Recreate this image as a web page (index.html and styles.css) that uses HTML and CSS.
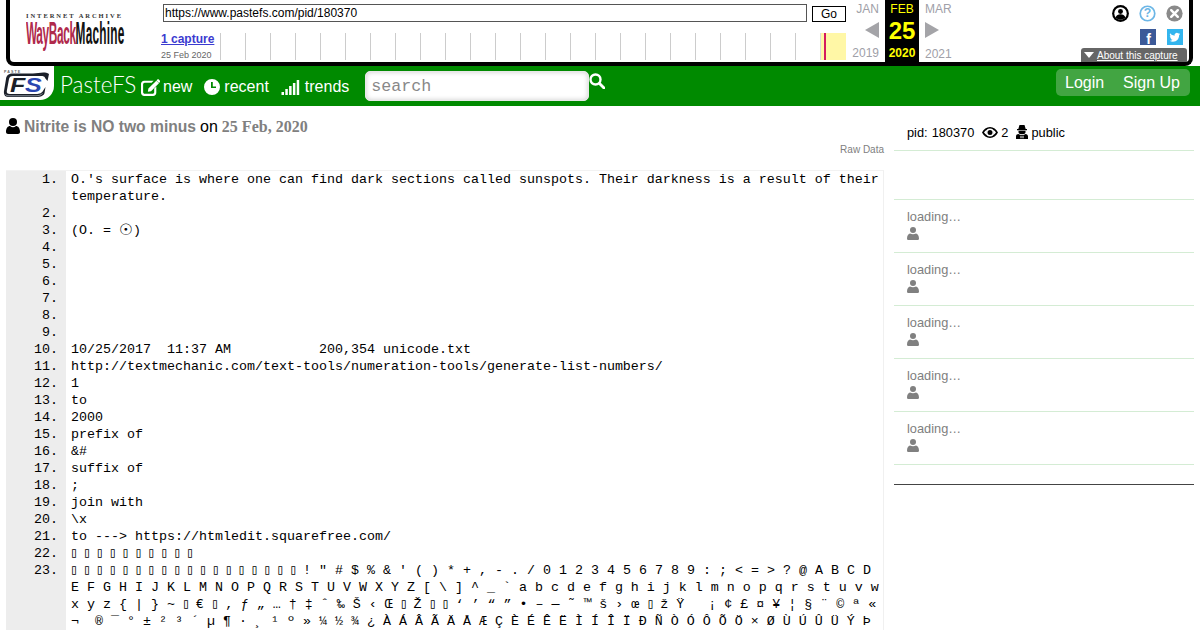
FILE: index.html
```html
<!DOCTYPE html>
<html lang="en">
<head>
<meta charset="utf-8">
<title>Nitrite is NO two minus - PasteFS</title>
<link rel="stylesheet" href="styles.css">
</head>
<body>
<header class="wb">
  <div class="wb-logo">
    <div class="wb-ia">INTERNET ARCHIVE</div>
    <div class="wb-mark"><span class="wb-red">WayBack</span><span class="wb-black">Machine</span></div>
  </div>
  <div class="wb-center">
    <div class="wb-url-row">
      <input class="wb-url" type="text" value="https://www.pastefs.com/pid/180370">
      <button class="wb-go" type="button">Go</button>
    </div>
    <div class="wb-spark-row">
      <div class="wb-cap"><a class="wb-cap-link" href="#">1 capture</a><span class="wb-cap-date">25 Feb 2020</span></div>
      <div class="wb-spark">
        <i></i><i></i><i></i><i></i><i></i><i></i><i></i><i></i><i></i><i></i><i></i><i></i><i></i><i></i><i></i><i></i><i></i><i></i><i></i><i></i><i></i><i></i><i></i><i></i>
        <b class="wb-year"><u></u></b>
      </div>
    </div>
  </div>
  <div class="wb-cal">
    <div class="wb-col wb-prev">
      <span class="wb-m">JAN</span>
      <svg class="wb-arrow" viewBox="0 0 14 16"><path d="M14 0V16L0 8Z"/></svg>
      <span class="wb-y">2019</span>
    </div>
    <div class="wb-col wb-now">
      <span class="wb-m">FEB</span>
      <span class="wb-d">25</span>
      <span class="wb-y">2020</span>
    </div>
    <div class="wb-col wb-next">
      <span class="wb-m">MAR</span>
      <svg class="wb-arrow" viewBox="0 0 14 16"><path d="M0 0V16L14 8Z"/></svg>
      <span class="wb-y">2021</span>
    </div>
  </div>
  <div class="wb-right">
    <div class="wb-icons">
      <svg class="wb-ic" viewBox="0 0 18 18"><circle cx="9" cy="9" r="8.9"/><circle cx="9" cy="9" r="6.6" fill="#fff"/><circle cx="9" cy="6.8" r="2.6"/><path d="M3.8 13.2c.8-2.6 2.8-3.4 5.2-3.4s4.4.8 5.2 3.4c-1.4 1.4-3.2 2.3-5.2 2.3s-3.8-.9-5.2-2.3z"/></svg>
      <svg class="wb-ic" viewBox="0 0 18 18"><circle cx="9" cy="9" r="7.7" fill="none" stroke="#6cb6e6" stroke-width="1.8"/><text class="wb-q" x="9" y="13.2" text-anchor="middle">?</text></svg>
      <svg class="wb-ic" viewBox="0 0 18 18"><circle cx="9" cy="9" r="8.6" fill="#8a8a8a"/><path d="M5.5 5.5l7 7M12.5 5.5l-7 7" stroke="#fff" stroke-width="2.6" stroke-linecap="round"/></svg>
    </div>
    <div class="wb-share">
      <svg class="wb-sq wb-fb" viewBox="0 0 16 16"><text class="wb-f" x="8.5" y="14.500" text-anchor="middle">f</text></svg>
      <svg class="wb-sq wb-tw" viewBox="0 0 16 16"><path fill="#fff" transform="translate(1.500 1.500) scale(.82)" d="M14 4.200c-.5.200-1 .4-1.500.4.500-.3 1-.8 1.200-1.400-.5.300-1.100.5-1.700.6a2.700 2.700 0 0 0-4.600 2.500C5.200 6.200 3.300 5.200 2 3.500c-.7 1.200-.4 2.800.8 3.600-.4 0-.8-.1-1.200-.3 0 1.300.9 2.400 2.100 2.700-.4.100-.8.100-1.200 0 .3 1.100 1.300 1.800 2.500 1.900-1 .8-2.300 1.200-3.600 1 1.200.8 2.600 1.200 4 1.200 4.900 0 7.700-4.100 7.500-7.900.6-.4 1.100-.9 1.100-1.500z"/></svg>
    </div>
    <div class="wb-about"><span class="wb-tri"></span><a class="wb-about-link" href="#">About this capture</a></div>
  </div>
</header>

<nav class="nav">
  <a class="logo" href="#">
    <svg class="logo-svg" viewBox="0 0 46 28">
      <text class="logo-paste" x="1" y="3.500">PASTE</text>
      <path d="M1 22L3 10C3.500 6 6 4.500 10 4.500H30C36 4 42 2 46 5L44.500 12 42 9C42 7.500 40 7 38 7H10C7.500 7 6.500 8 6 10L3.800 22C3.500 24 4.500 25 7 25H33C37 25 39 24 40.500 21L42.500 18 41.500 24C41 26.500 38 28 33 28H5C2 28 .5 25 1 22Z" fill="#1b2029"/>
      <path d="M2.500 25.500C3.500 26.500 4.500 26.800 6 26.800H33C36 26.800 38 26 39.500 24.500" fill="none" stroke="#aab0ba" stroke-width=".8"/>
      <text class="logo-f" transform="translate(7 23) scale(1.25 1)" x="0" y="0">F</text>
      <text class="logo-s" transform="translate(22 23) scale(1.25 1)" x="0" y="0">S</text>
    </svg>
  </a>
  <span class="brand">PasteFS</span>
  <a class="nav-link" href="#"><svg class="nav-ic" viewBox="0 0 18 16"><path d="M3 1.500h9l-2 2H3.500c-.8 0-1.500.7-1.500 1.500v7.500c0 .8.700 1.500 1.500 1.500H11c.8 0 1.500-.7 1.500-1.500V9l2-2v6c0 1.700-1.300 3-3 3H3c-1.700 0-3-1.300-3-3V4.500c0-1.700 1.300-3 3-3z"/><path d="M14.500 1.500l2.500 2.500-7.500 7.500-3 .5.500-3zM15.500.5c.4-.4 1-.4 1.400 0l1 1c.4.400.4 1 0 1.400l-.8.800-2.400-2.400z"/></svg>new</a>
  <a class="nav-link" href="#"><svg class="nav-ic nav-ic-clock" viewBox="0 0 16 16"><path fill-rule="evenodd" d="M8 0a8 8 0 1 1 0 16A8 8 0 0 1 8 0zM7 3v6h5V7.500H8.800V3z"/></svg>recent</a>
  <a class="nav-link" href="#"><svg class="nav-ic nav-ic-signal" viewBox="0 0 18 15"><rect x="0" y="12" width="2.500" height="3"/><rect x="3.800" y="9" width="2.500" height="6"/><rect x="7.600" y="6" width="2.500" height="9"/><rect x="11.400" y="3" width="2.500" height="12"/><rect x="15.200" y="0" width="2.500" height="15"/></svg>trends</a>
  <input class="search" type="text" placeholder="search">
  <svg class="search-ic" viewBox="0 0 16 16"><circle cx="6.500" cy="6.500" r="5" fill="none" stroke="#fff" stroke-width="2.400"/><path d="M10.500 10.500l4.500 4.500" stroke="#fff" stroke-width="2.800" stroke-linecap="round"/></svg>
  <div class="auth"><a class="auth-link" href="#">Login</a><a class="auth-link" href="#">Sign Up</a></div>
</nav>

<div class="page">
  <main class="main">
    <h1 class="title">
      <svg class="user-ic" viewBox="0 0 14 16"><circle cx="7" cy="4" r="4"/><path d="M0 14c0-4 2-6 4-6 1 .8 2 1.200 3 1.200S9 8.800 10 8c2 0 4 2 4 6 0 1.300-1 2-2 2H2c-1 0-2-.7-2-2z"/></svg>
      <a class="title-name" href="#">Nitrite is NO two minus</a> <span class="title-on">on</span> <span class="title-date">25 Feb, 2020</span>
    </h1>
    <div class="raw"><a class="raw-link" href="#">Raw Data</a></div>
    <div class="code">
      <div class="ln"><span class="n">1.</span><span class="t">O.'s surface is where one can find dark sections called sunspots. Their darkness is a result of their temperature.</span></div>
      <div class="ln"><span class="n">2.</span><span class="t"></span></div>
      <div class="ln"><span class="n">3.</span><span class="t">(O. = <span class="sun">☉</span>)</span></div>
      <div class="ln"><span class="n">4.</span><span class="t"></span></div>
      <div class="ln"><span class="n">5.</span><span class="t"></span></div>
      <div class="ln"><span class="n">6.</span><span class="t"></span></div>
      <div class="ln"><span class="n">7.</span><span class="t"></span></div>
      <div class="ln"><span class="n">8.</span><span class="t"></span></div>
      <div class="ln"><span class="n">9.</span><span class="t"></span></div>
      <div class="ln"><span class="n">10.</span><span class="t">10/25/2017  11:37 AM           200,354 unicode.txt</span></div>
      <div class="ln"><span class="n">11.</span><span class="t">http://textmechanic.com/text-tools/numeration-tools/generate-list-numbers/</span></div>
      <div class="ln"><span class="n">12.</span><span class="t">1</span></div>
      <div class="ln"><span class="n">13.</span><span class="t">to</span></div>
      <div class="ln"><span class="n">14.</span><span class="t">2000</span></div>
      <div class="ln"><span class="n">15.</span><span class="t">prefix of</span></div>
      <div class="ln"><span class="n">16.</span><span class="t">&amp;#</span></div>
      <div class="ln"><span class="n">17.</span><span class="t">suffix of</span></div>
      <div class="ln"><span class="n">18.</span><span class="t">;</span></div>
      <div class="ln"><span class="n">19.</span><span class="t">join with</span></div>
      <div class="ln"><span class="n">20.</span><span class="t">\x</span></div>
      <div class="ln"><span class="n">21.</span><span class="t">to ---&gt; https://htmledit.squarefree.com/</span></div>
      <div class="ln"><span class="n">22.</span><span class="t"><span class="tf">▯</span> <span class="tf">▯</span> <span class="tf">▯</span> <span class="tf">▯</span> <span class="tf">▯</span> <span class="tf">▯</span> <span class="tf">▯</span> <span class="tf">▯</span> <span class="tf">▯</span> <span class="tf">▯</span></span></div>
      <div class="ln"><span class="n">23.</span><span class="t"><span class="tf">▯</span> <span class="tf">▯</span> <span class="tf">▯</span> <span class="tf">▯</span> <span class="tf">▯</span> <span class="tf">▯</span> <span class="tf">▯</span> <span class="tf">▯</span> <span class="tf">▯</span> <span class="tf">▯</span> <span class="tf">▯</span> <span class="tf">▯</span> <span class="tf">▯</span> <span class="tf">▯</span> <span class="tf">▯</span> <span class="tf">▯</span> <span class="tf">▯</span> <span class="tf">▯</span> ! " # $ % &amp; ' ( ) * + , - . / 0 1 2 3 4 5 6 7 8 9 : ; &lt; = &gt; ? @ A B C D E F G H I J K L M N O P Q R S T U V W X Y Z [ \ ] ^ _ ` a b c d e f g h i j k l m n o p q r s t u v w x y z { | } ~ <span class="tf">▯</span> € <span class="tf">▯</span> ‚ ƒ „ … † ‡ ˆ ‰ Š ‹ Œ <span class="tf">▯</span> Ž <span class="tf">▯</span> <span class="tf">▯</span> ‘ ’ “ ” • – — ˜ ™ š › œ <span class="tf">▯</span> ž Ÿ &nbsp; ¡ ¢ £ ¤ ¥ ¦ § ¨ © ª « ¬ &shy; ® ¯ ° ± ² ³ ´ µ ¶ · ¸ ¹ º » ¼ ½ ¾ ¿ À Á Â Ã Ä Å Æ Ç È É Ê Ë Ì Í Î Ï Ð Ñ Ò Ó Ô Õ Ö × Ø Ù Ú Û Ü Ý Þ</span></div>
    </div>
  </main>
  <aside class="side">
    <div class="meta">
      <span class="meta-pid">pid:</span><span>180370</span>
      <svg class="eye-ic" viewBox="0 0 16 11"><path fill-rule="evenodd" d="M8 0c3.500 0 6.300 2.200 8 5.500C14.300 8.800 11.500 11 8 11S1.700 8.800 0 5.500C1.700 2.200 4.500 0 8 0zM8 1.500a4 4 0 1 0 0 8 4 4 0 0 0 0-8zM2 5.500c.7 1 1.500 1.800 2.500 2.400a5 5 0 0 1 0-4.800C3.500 3.700 2.700 4.500 2 5.500zM14 5.500c-.7-1-1.500-1.800-2.500-2.400a5 5 0 0 1 0 4.800c1-.6 1.800-1.400 2.500-2.400zM8 3a2.500 2.500 0 1 1 0 5 2.500 2.500 0 0 1 0-5z"/></svg>
      <span class="meta-views">2</span>
      <svg class="secret-ic" viewBox="0 0 12 14"><path d="M3.500 0h5l1.200 4H11v1.200H1V4h1.300z"/><path d="M2.500 5.800h7v1.500c0 1-1 2-3.500 2s-3.500-1-3.500-2z"/><path fill-rule="evenodd" d="M0 14v-2.500C0 10 1 9 2.500 9c1 .8 2 1 3.500 1s2.500-.2 3.500-1C11 9 12 10 12 11.500V14zM4.500 10.800v2.400h1v-2.400zM6.500 10.800v2.400h1v-2.400z"/></svg>
      <span>public</span>
    </div>
    <div class="spacer-row"></div>
    <div class="item"><span class="loading">loading…</span><svg class="item-ic" viewBox="0 0 12 13"><circle cx="6" cy="3" r="3"/><path d="M0 11.500C0 8.500 1.500 7 3 6.500c1 .6 2 .8 3 .8s2-.2 3-.8c1.500.5 3 2 3 5 0 1-.8 1.500-1.500 1.500h-9C.8 13 0 12.500 0 11.500z"/></svg></div>
    <div class="item"><span class="loading">loading…</span><svg class="item-ic" viewBox="0 0 12 13"><circle cx="6" cy="3" r="3"/><path d="M0 11.500C0 8.500 1.500 7 3 6.500c1 .6 2 .8 3 .8s2-.2 3-.8c1.500.5 3 2 3 5 0 1-.8 1.500-1.500 1.500h-9C.8 13 0 12.500 0 11.500z"/></svg></div>
    <div class="item"><span class="loading">loading…</span><svg class="item-ic" viewBox="0 0 12 13"><circle cx="6" cy="3" r="3"/><path d="M0 11.500C0 8.500 1.500 7 3 6.500c1 .6 2 .8 3 .8s2-.2 3-.8c1.500.5 3 2 3 5 0 1-.8 1.500-1.500 1.500h-9C.8 13 0 12.500 0 11.500z"/></svg></div>
    <div class="item"><span class="loading">loading…</span><svg class="item-ic" viewBox="0 0 12 13"><circle cx="6" cy="3" r="3"/><path d="M0 11.500C0 8.500 1.500 7 3 6.500c1 .6 2 .8 3 .8s2-.2 3-.8c1.500.5 3 2 3 5 0 1-.8 1.500-1.500 1.500h-9C.8 13 0 12.500 0 11.500z"/></svg></div>
    <div class="item"><span class="loading">loading…</span><svg class="item-ic" viewBox="0 0 12 13"><circle cx="6" cy="3" r="3"/><path d="M0 11.500C0 8.500 1.500 7 3 6.500c1 .6 2 .8 3 .8s2-.2 3-.8c1.500.5 3 2 3 5 0 1-.8 1.500-1.500 1.500h-9C.8 13 0 12.500 0 11.500z"/></svg></div>
    <hr class="side-end">
  </aside>
</div>
</body>
</html>
```
FILE: styles.css
```css
* { box-sizing: border-box; }
html, body { margin: 0; padding: 0; height: 630px; overflow: hidden; background: #fff; }
body { font-family: "Liberation Sans", Arial, sans-serif; color: #000; }

/* Wayback toolbar */
.wb {
  display: flex;
  height: 66px;
  margin: 0 7px 0 6px;
  border: 4px solid #000;
  border-top: 0;
  border-radius: 0 0 8px 8px;
  background: #fff;
  position: relative;
  z-index: 1;
}
.wb-logo { width: 117px; padding: 12px 0 0 16px; flex: none; }
.wb-ia { font-size: 6.500px; line-height: 7px; font-weight: 700; letter-spacing: 1.950px; color: #333; white-space: nowrap; font-family: "Liberation Serif", serif; }
.wb-mark { display: flex; margin-top: 0; height: 28px; width: max-content; transform-origin: 0 0; transform: scaleX(.37); white-space: nowrap; font-size: 32px; line-height: 28px; font-weight: 700; }
.wb-red { color: #b02a4c; letter-spacing: -1px; }
.wb-black { color: #111; letter-spacing: .6px; }
.wb-center { width: 723px; flex: none; padding: 4px 0 0 36px; }
.wb-url-row { display: flex; align-items: center; }
.wb-url { width: 644px; height: 18px; border: 1px solid #555; padding: 0 1px; margin: 0; font: 12px "Liberation Sans", sans-serif; color: #000; background: #fff; }
.wb-go { width: 34px; height: 16px; margin: 1px 0 0 5px; border: 1px solid #000; background: #fff; padding: 0; font: 12px "Liberation Sans", sans-serif; color: #000; }
.wb-spark-row { display: flex; margin-top: 11px; margin-left: -2px; }
.wb-cap { width: 59px; flex: none; display: flex; flex-direction: column; }
.wb-cap-link { font-size: 12px; line-height: 14px; font-weight: 700; color: #3b3bd0; text-decoration: underline; margin-top: -1px; white-space: nowrap; }
.wb-cap-date { font-size: 9px; line-height: 12px; margin-top: 3px; color: #666; white-space: nowrap; }
.wb-spark { display: flex; height: 27px; }
.wb-spark i { width: 25px; height: 27px; border-left: 1px solid #ccc; flex: none; }
.wb-year { width: 26px; flex: none; height: 27px; background: #fff7a6; border-left: 1px solid #ddd; padding-left: 3px; }
.wb-year u { display: block; width: 2px; height: 27px; background: #d5195f; }
.wb-cal { display: flex; flex: none; width: 108px; height: 62px; }
.wb-col { display: flex; flex-direction: column; align-items: center; font-size: 12px; color: #a0a0a8; }
.wb-prev { width: 35px; padding-left: 1px; align-items: flex-end; padding-right: 6px; }
.wb-now { width: 34px; background: #000; color: #ff0; }
.wb-next { width: 39px; padding-left: 6px; align-items: flex-start; }
.wb-m { line-height: 14px; margin-top: 2px; }
.wb-now .wb-m { color: #ff0; }
.wb-arrow { width: 14px; height: 16px; margin: 6px 0 8px; fill: #a4a4a8; flex: none; }
.wb-y { line-height: 14px; }
.wb-next .wb-y { margin-top: 1px; }
.wb-now .wb-y { font-weight: 700; }
.wb-d { font-size: 24px; line-height: 30px; font-weight: 700; height: 30px; }
.wb-right { flex: 1; position: relative; display: flex; flex-direction: column; align-items: flex-end; padding-right: 6px; padding-top: 5px; }
.wb-icons { display: flex; gap: 10px; }
.wb-ic { width: 17px; height: 17px; flex: none; }
.wb-q { font: 700 13px "Liberation Sans", sans-serif; fill: #6cb6e6; }
.wb-share { display: flex; gap: 11px; margin-top: 7px; }
.wb-sq { width: 16px; height: 16px; flex: none; }
.wb-fb { background: #3b5998; }
.wb-f { font: 700 14px "Liberation Sans", sans-serif; fill: #fff; }
.wb-tw { background: #33b5ee; }
.wb-about { position: absolute; right: 2px; bottom: 0; width: 106px; height: 14px; background: #666; border-radius: 3px 3px 0 0; display: flex; align-items: center; padding-left: 3px; }
.wb-tri { width: 0; height: 0; border: 5px solid transparent; border-top: 6px solid #fff; border-bottom: 0; margin-right: 3px; flex: none; }
.wb-about-link { font-size: 10px; color: #fff; text-decoration: underline; white-space: nowrap; }

/* Nav */
.nav { display: flex; align-items: flex-start; height: 40px; background: #008a00; position: relative; color: #fff; }
.logo { width: 54px; height: 34px; background: #fff; border-radius: 0 0 14px 0; flex: none; padding: 3px 0 0 3px; }
.logo-svg { width: 46px; height: 28px; display: block; overflow: visible; }
.logo-paste { font: 700 3.600px "Liberation Sans", sans-serif; letter-spacing: 1.100px; fill: #666; }
.logo-f { font: italic 700 20px "Liberation Sans", sans-serif; fill: #1b2029; }
.logo-s { font: italic 700 20px "Liberation Sans", sans-serif; fill: #2a46b0; }
.brand { margin: 4px 0 0 6px; font-family: Lato, sans-serif; font-weight: 300; font-size: 22.500px; line-height: 29px; width: 81px; flex: none; color: #fff; white-space: nowrap; }
.nav-link { display: flex; align-items: center; height: 22px; margin-top: 10px; margin-right: 12px; font-size: 16px; color: #fff; text-decoration: none; white-space: nowrap; flex: none; }
.nav-ic { width: 19px; height: 17px; fill: #fff; margin-right: 3px; flex: none; }
.nav-ic-clock { width: 16px; height: 16px; margin-right: 4px; }
.nav-ic-signal { width: 19px; height: 15px; margin-right: 5px; }
.search { width: 224px; height: 30px; margin: 5px 0 0 4px; border: 1px solid #e8e8e8; border-radius: 5px; background: #fff; box-shadow: inset 0 0 5px #ccc; padding: 0 5px; font: 16.670px "Liberation Mono", monospace; flex: none; }
.search::placeholder { color: #888; opacity: 1; }
.search-ic { width: 16px; height: 16px; margin-top: 7px; flex: none; }
.auth { margin-left: auto; margin-right: 10px; margin-top: 3px; width: 134px; height: 27px; background: #42a542; border-radius: 5px; display: flex; justify-content: space-between; padding: 0 10px 0 9px; flex: none; }
.auth-link { font-size: 16px; line-height: 27px; color: #fff; text-decoration: none; white-space: nowrap; }

/* Page */
.page { display: flex; height: 524px; overflow: hidden; }
.main { width: 884px; flex: none; padding-left: 6px; }
.title { margin: 12px 0 0; font-size: 16px; line-height: 18px; font-weight: 400; height: 18px; white-space: nowrap; display: flex; align-items: center; gap: 4px; }
.user-ic { width: 14px; height: 16px; fill: #000; flex: none; position: relative; top: -1px; }
.title-name { font-size: 15.650px; font-weight: 700; color: #808080; text-decoration: none; }
.title-date { font-family: "Liberation Serif", serif; font-weight: 700; color: #808080; }
.raw { text-align: right; font-size: 10px; line-height: 12px; margin-top: 8px; height: 12px; }
.raw-link { color: #808080; text-decoration: none; }
.code { margin-top: 14px; border-top: 1px solid #f2f2f2; border-right: 1px solid #f0f0f0; font: 13.333px/17px "Liberation Mono", "DejaVu Sans Mono", monospace; }
.ln { display: flex; min-height: 17px; }
.n { width: 60px; flex: none; background: #ededed; text-align: right; padding-right: 8px; }
.t { flex: 1; padding-left: 5px; white-space: pre-wrap; }
.sun { font-family: "DejaVu Sans", sans-serif; font-size: 15.500px; line-height: 1; vertical-align: -1px; }
.tf { letter-spacing: -3.140px; margin: 0 1px 0 -1px; }

/* Sidebar */
.side { margin-left: 10px; width: 300px; flex: none; font-size: 12.800px; }
.meta { height: 45px; border-bottom: 1px solid #d4ecd4; padding: 19px 0 0 13px; display: flex; align-items: flex-start; line-height: 15px; white-space: nowrap; }
.meta-pid { margin-right: 4px; }
.eye-ic { width: 16px; height: 11px; margin: 2px 0 0 8px; flex: none; }
.meta-views { margin: 0 8px 0 3px; }
.secret-ic { width: 12px; height: 14px; margin-right: 3px; flex: none; }
.spacer-row { height: 49px; border-bottom: 1px solid #d4ecd4; }
.item { height: 53px; border-bottom: 1px solid #d4ecd4; padding: 9px 0 0 13px; display: flex; flex-direction: column; align-items: flex-start; }
.loading { color: #808080; line-height: 15px; }
.item-ic { width: 12px; height: 13px; fill: #808080; margin-top: 3px; }
.side-end { margin: 19px 0 0; border: 0; border-top: 1px solid #444; height: 0; }
```
